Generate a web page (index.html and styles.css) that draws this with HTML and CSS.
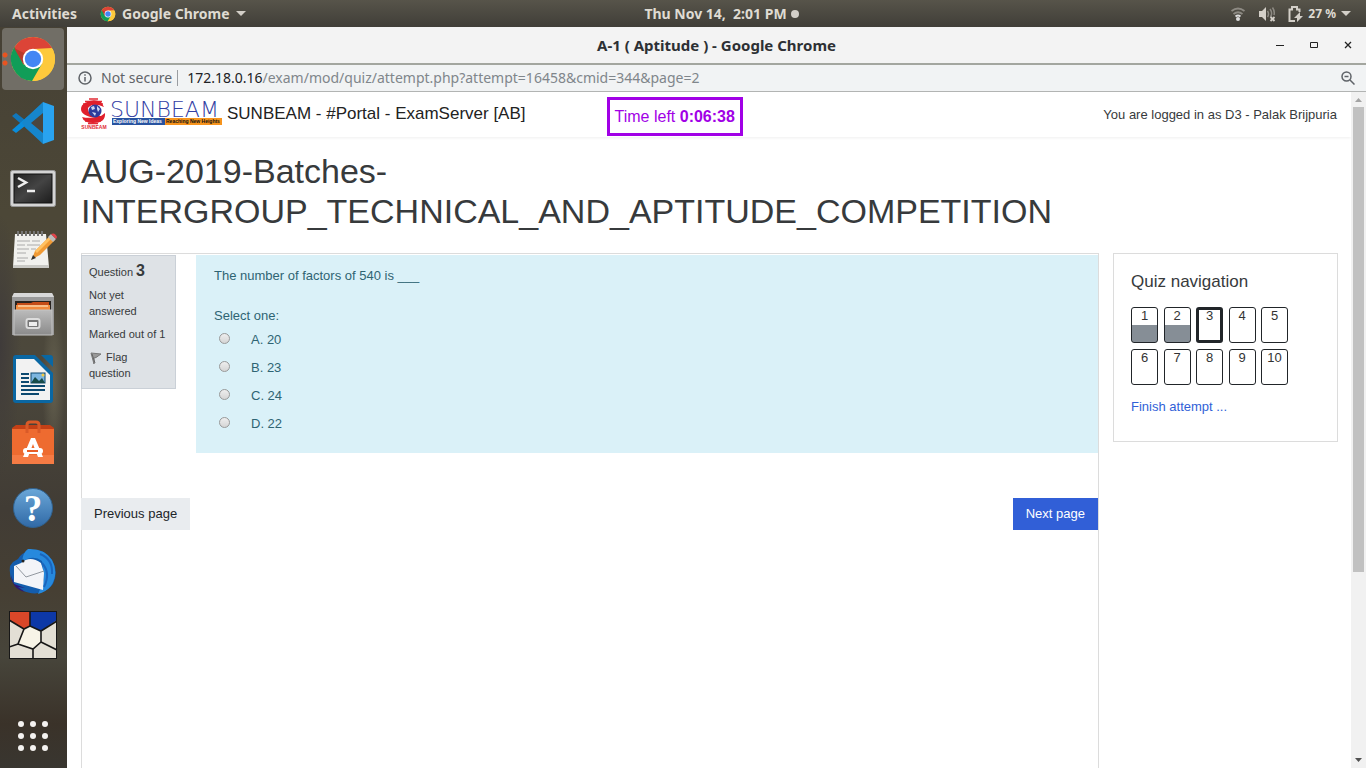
FILE: index.html
```html
<!DOCTYPE html>
<html lang="en">
<head>
<meta charset="utf-8">
<title>A-1 ( Aptitude )</title>
<link rel="stylesheet" href="styles.css">
</head>
<body>
<svg width="0" height="0" class="defs" aria-hidden="true">
  <symbol id="chrome" viewBox="0 0 48 48">
    <circle cx="24" cy="24" r="22" fill="#fdc93c"/>
    <path d="M4.900 13A22 22 0 0 1 43.100 13L24 14L14.500 29.500Z" fill="#dc4437"/>
    <path d="M43.600 14A22 22 0 0 1 23 46L33.500 29.500L24 14Z" fill="#fdc93c"/>
    <path d="M5.500 12A22 22 0 0 0 23 46L32.500 29.500L14.500 29.500Z" fill="#109d58"/>
    <path d="M5 13L14.500 29.500L17 19Z" fill="#b93a2d"/>
    <circle cx="24" cy="24" r="10.200" fill="#fff"/>
    <circle cx="24" cy="24" r="8.200" fill="#4486f4"/>
  </symbol>
</svg>
<header class="topbar">
  <div class="topbar-left">
    <button class="top-item">Activities</button>
    <button class="top-item app-menu"><svg width="16" height="16"><use href="#chrome"/></svg>Google Chrome<svg width="10" height="6" viewBox="0 0 10 6"><path d="M0 0h10l-5 5z" fill="#d3cfc8"/></svg></button>
  </div>
  <button class="top-item clock">Thu Nov 14,&nbsp; 2:01 PM<span class="dot"></span></button>
  <button class="top-item status" aria-label="System menu, battery 27 %">
    <svg width="16" height="16" viewBox="0 0 16 16" fill="none"><path d="M1.500 5Q8 0 14.500 5M3.500 8Q8 4.500 12.500 8" stroke="#8d8a83" stroke-width="1.800"/><path d="M5.500 10.500Q8 8.500 10.500 10.500" stroke="#ddd" stroke-width="1.800"/><circle cx="8" cy="13" r="2" fill="#ddd"/></svg>
    <svg width="18" height="16" viewBox="0 0 18 16" fill="none"><path d="M1 5h3l4-4v14l-4-4H1z" fill="#d3cfc8"/><path d="M9.500 5Q11.500 8 9.500 11M12 3Q15 7 12.500 11M14.500 1.500Q17 5 16 9" stroke="#8d8a83" stroke-width="1.500"/><path d="M12.500 11l4 4m0-4l-4 4" stroke="#d3cfc8" stroke-width="1.800"/></svg>
    <svg width="15" height="16" viewBox="0 0 15 16" fill="none"><path d="M7 15H1.500V3.500H4V1h5v2.500h2.500V6" stroke="#d3cfc8" stroke-width="2"/><path d="M12 6l-6 6h3v4l6-6h-3z" fill="#d3cfc8"/></svg>
    <span class="battery">27 %</span>
    <svg width="10" height="6" viewBox="0 0 10 6"><path d="M0 0h10l-5 5z" fill="#d3cfc8"/></svg>
  </button>
</header>
<div class="desktop">
  <nav class="dock" aria-label="Dock">
    <button class="dock-item active" aria-label="Google Chrome"><svg width="48" height="48"><use href="#chrome"/></svg></button>
    <button class="dock-item" aria-label="Visual Studio Code"><svg width="48" height="48" viewBox="0 0 48 48"><path d="M3 17l4-3 27 21v9z" fill="#1177bb"/><path d="M3 31l4 3 27-21V4z" fill="#0a8ddc"/><path d="M34 3l11 4v34l-11 4z" fill="#29a3f0"/><path d="M34 3v12L23 24l11 9v12L17 29l-4-5 4-5z" fill="#1686cc"/><path d="M34 14v20L22 24z" fill="#4b463d"/></svg></button>
    <button class="dock-item" aria-label="Terminal"><svg width="48" height="48" viewBox="0 0 48 48"><defs><linearGradient id="tg" x1="0" y1="0" x2="1" y2="1"><stop offset="0" stop-color="#222"/><stop offset=".5" stop-color="#444"/><stop offset="1" stop-color="#1c1c1c"/></linearGradient></defs><rect x="1.500" y="7.500" width="45" height="36" rx="2" fill="#d4d4d4" stroke="#989898"/><rect x="5" y="11" width="38" height="29" fill="url(#tg)" stroke="#111"/><path d="M9 15l8 4.500-8 4.500M18 28h8" fill="none" stroke="#eee" stroke-width="2.500"/></svg></button>
    <button class="dock-item" aria-label="Text Editor"><svg width="48" height="48" viewBox="0 0 48 48"><path d="M6 7h31l3 33H4z" fill="#f1f1ee"/><path d="M4 38h36v3H4z" fill="#c9c9c5"/><path d="M9 4v5m4-5v5m4-5v5m4-5v5m4-5v5m4-5v5m4-5v5" stroke="#777" stroke-width="2"/><path d="M8 14h13m2 0h8M8 18h8m2 0h13M8 22h12m2 0h5M8 26h9M8 31h11M8 34h8" stroke="#aaa"/><path d="M23 32l3-8L41 9l5 4-15 15z" fill="#f09a35"/><path d="M26 24l15-15 2 2-15 15z" fill="#ffc162"/><path d="M39 10l3-3 5 5-3 3z" fill="#bbb"/><path d="M42 7q4-2 6 3l-1 2z" fill="#e3434a"/><path d="M22 33l2-5 3 3z" fill="#333"/></svg></button>
    <button class="dock-item" aria-label="Files"><svg width="48" height="48" viewBox="0 0 48 48"><defs><linearGradient id="fg" x1="0" y1="0" x2="0" y2="1"><stop offset="0" stop-color="#bbb"/><stop offset="1" stop-color="#8b8b8b"/></linearGradient></defs><path d="M5 2h38l2 4v38H3V6z" fill="#999"/><path d="M5 2h38l2 4H3z" fill="#d8d8d8"/><path d="M6 10h36v10H6z" fill="#28231f"/><path d="M8 12h14l2-1h16v8H8z" fill="#c54c17"/><path d="M7 14h34v6H7z" fill="#f18a3d"/><path d="M9 15h30" stroke="#fff3d6"/><rect x="5" y="19" width="38" height="25" fill="url(#fg)" stroke="#c4c4c4"/><rect x="17.500" y="28" width="13" height="9" rx="2" fill="#777" stroke="#ddd" stroke-width="2"/><rect x="20" y="31" width="8" height="4" fill="#eee"/></svg></button>
    <button class="dock-item" aria-label="LibreOffice Writer"><svg width="48" height="48" viewBox="0 0 48 48"><path d="M7 0h19l18 18v27q0 3-3 3H7q-3 0-3-3V3q0-3 3-3z" fill="#0a67a3"/><path d="M32 0h9q3 0 3 3v9z" fill="#0a67a3"/><path d="M7 4h18l16 16v25H7z" fill="#f2f2f2"/><path d="M12 19h8M12 23h8M12 27h8M12 31h24M12 35h24M12 39h18" stroke="#0c4970" stroke-width="2"/><rect x="22" y="18" width="14" height="10" fill="#7db6e0" stroke="#0c4970"/><path d="M22 28l4-6 4 4 3-3 3 5z" fill="#174b49"/><circle cx="34" cy="20" r="1.500" fill="#f4cb42"/></svg></button>
    <button class="dock-item" aria-label="Ubuntu Software"><svg width="48" height="48" viewBox="0 0 48 48"><path d="M3 9l4-3h34l4 3v6H3z" fill="#c34016"/><path d="M3 10h42v35H3z" fill="#ee6b30"/><path d="M3 36h42v9H3z" fill="#f57b44"/><path d="M18 14V6q0-3 3-3h6q3 0 3 3v8" fill="none" stroke="#d95a28" stroke-width="3"/><path d="M22 19h4l8 19h-5l-5-13-5 13h-5z" fill="#fff"/><rect x="14" y="29" width="20" height="6" rx="3" fill="#fff"/><path d="M18 32h11" stroke="#e85e27" stroke-width="2"/></svg></button>
    <button class="dock-item" aria-label="Help"><svg width="48" height="48" viewBox="0 0 48 48"><defs><linearGradient id="hg" x1="0" y1="0" x2="0" y2="1"><stop offset="0" stop-color="#6ba7d8"/><stop offset="1" stop-color="#3069a6"/></linearGradient></defs><circle cx="24" cy="25" r="19.500" fill="url(#hg)" stroke="#30618e"/><text x="24" y="38" text-anchor="middle" class="help-mark">?</text></svg></button>
    <button class="dock-item" aria-label="Thunderbird"><svg width="48" height="48" viewBox="0 0 48 48"><path d="M1 19Q-1 36 12 43Q32 52 44 37Q51 22 40 9Q30 0 20 4Q12 6 9 12L4 15z" fill="#145dad"/><path d="M19 2Q35 1 43 13Q50 26 42 39Q37 45 29 47L35 33L33 14Q24 7 13 15Q14 5 19 2z" fill="#2789dd"/><path d="M5 19l7-3q9-8 20 0l3 10-1 17L5 35z" fill="#f3f4f8"/><path d="M7 19l10 11 18-6" fill="none" stroke="#9298a0"/><path d="M2 28l3 9 11 4-7-1 7 5Q3 42 2 28z" fill="#2f1576"/><path d="M31 7Q44 12 43 27M33 16q9 10 2 24" fill="none" stroke="#1a65bd" stroke-width="2"/><circle cx="14" cy="14" r="1.500" fill="#222"/></svg></button>
    <button class="dock-item" aria-label="Mosaic"><svg width="48" height="48" viewBox="0 0 48 48"><path d="M0 0h48v48H0z" fill="#e3dfd5"/><path d="M0 0h21v15l-6 3L0 9z" fill="#d94729"/><path d="M21 0h27v9l-16 11-11-5z" fill="#0d38a7"/><path d="M15 18l6-3 11 5v11l-8 7-15-5z" fill="#f7f4e7"/><path d="M0 9l15 9 6-3V0M48 10L32 20l-11-5M15 18L9 33l15 5 8-7V20M0 36l9-3M24 38v10M32 31l16 8" fill="none" stroke="#171717" stroke-width="1.600"/><rect x=".5" y=".5" width="47" height="47" fill="none" stroke="#171717"/></svg></button>
    <button class="dock-item apps" aria-label="Show applications"><svg width="48" height="48" viewBox="0 0 48 48" fill="#f4f2f0"><circle cx="12" cy="12" r="3"/><circle cx="24" cy="12" r="3"/><circle cx="36" cy="12" r="3"/><circle cx="12" cy="24" r="3"/><circle cx="24" cy="24" r="3"/><circle cx="36" cy="24" r="3"/><circle cx="12" cy="36" r="3"/><circle cx="24" cy="36" r="3"/><circle cx="36" cy="36" r="3"/></svg></button>
  </nav>
  <div class="window">
    <div class="titlebar">
      <span class="window-title">A-1 ( Aptitude ) - Google Chrome</span>
      <div class="window-buttons">
        <button aria-label="Minimize"><svg width="8" height="8"><path d="M0 4.500h8" stroke="#222"/></svg></button>
        <button aria-label="Maximize"><svg width="8" height="8" fill="none"><path d="M.5 1.500h7v5h-7z" stroke="#222"/></svg></button>
        <button aria-label="Close"><svg width="8" height="8"><path d="M1 1l6 6m0-6l-6 6" stroke="#222" stroke-width="1.300"/></svg></button>
      </div>
    </div>
    <div class="urlbar">
      <svg width="14" height="14" viewBox="0 0 14 14" fill="none" stroke="#5f6368" stroke-width="1.500"><circle cx="7" cy="7" r="6"/><path d="M7 6v4.500M7 3.300v1.500"/></svg>
      <span class="insecure">Not secure</span>
      <span class="url"><b>172.18.0.16</b>/exam/mod/quiz/attempt.php?attempt=16458&amp;cmid=344&amp;page=2</span>
      <button class="zoom" aria-label="Zoom"><svg width="14" height="14" viewBox="0 0 14 14" fill="none" stroke="#5f6368" stroke-width="1.500"><circle cx="5.500" cy="5.500" r="4.500"/><path d="M9 9l4.500 4.500M3.500 5.500h4"/></svg></button>
    </div>
    <div class="viewport">
      <div class="page">
        <header class="site-header">
          <a class="brand" href="#">
            <svg width="142" height="32" viewBox="0 0 142 32">
              <g fill="none" stroke="#e22b35" stroke-width="1.500"><path d="M8 1h9M4 3.500h17M2 6h20M2 20.500h20M4 23h16M7 25.500h10"/></g>
              <path d="M4 5Q12 0 20 4L23 9Q12 4 7 10Q6 17 20 18L24 15Q25 25 12 25Q3 25 1 19Q8 22 15 20Q0 18 0 11Q0 7 4 5z" fill="#e01f2c"/>
              <circle cx="14" cy="13" r="6.500" fill="#2d3c9d"/><path d="M10 9l3-1 1 3-3 1zM16 8l3 3-2 3-1-3zM11 14l4 1-1 3z" fill="#cfd8f2"/>
              <text x="13" y="31" text-anchor="middle" class="logo-small">SUNBEAM</text>
              <text x="29" y="19" class="logo-name">SUNBEAM</text>
              <path d="M31 20h53v7H31z" fill="#2853a0"/><path d="M84 20h57v7H84z" fill="#f7941d"/>
              <text x="32" y="25" class="logo-tag logo-tag-light">Exploring New Ideas</text>
              <text x="85" y="25" class="logo-tag">Reaching New Heights</text>
            </svg>
            <span>SUNBEAM - #Portal - ExamServer [AB]</span>
          </a>
          <div class="timer">Time left <b>0:06:38</b></div>
          <span class="login">You are logged in as D3 - Palak Brijpuria</span>
        </header>
        <div class="body">
          <h1>AUG-2019-Batches-<wbr>INTERGROUP_TECHNICAL_AND_APTITUDE_COMPETITION</h1>
          <div class="columns">
            <main class="region">
              <form>
                <div class="question">
                  <section class="info">
                    <h2>Question <b>3</b></h2>
                    <p>Not yet answered</p>
                    <p>Marked out of 1</p>
                    <p><a href="#" class="flag"><svg width="14" height="12" viewBox="0 0 14 12"><path d="M2 1l10 1-5 3.500-2 .5v6z" fill="#999" stroke="#777"/><path d="M3 2l3 9" stroke="#666" fill="none"/></svg> Flag question</a></p>
                  </section>
                  <section class="formulation">
                    <p class="qtext">The number of factors of 540 is ___</p>
                    <fieldset>
                      <legend>Select one:</legend>
                      <label><input type="radio" name="answer">A. 20</label>
                      <label><input type="radio" name="answer">B. 23</label>
                      <label><input type="radio" name="answer">C. 24</label>
                      <label><input type="radio" name="answer">D. 22</label>
                    </fieldset>
                  </section>
                </div>
                <div class="actions">
                  <button type="button" class="btn">Previous page</button>
                  <button type="button" class="btn primary">Next page</button>
                </div>
              </form>
            </main>
            <aside class="quiznav">
              <h2>Quiz navigation</h2>
              <div class="numbers">
                <a href="#" class="saved">1</a><a href="#" class="saved">2</a><a href="#" class="current">3</a><a href="#">4</a><a href="#">5</a><a href="#">6</a><a href="#">7</a><a href="#">8</a><a href="#">9</a><a href="#">10</a>
              </div>
              <a class="finish" href="#">Finish attempt ...</a>
            </aside>
          </div>
        </div>
      </div>
      <div class="scrollbar" aria-hidden="true">
        <svg width="15" height="15"><path d="M4 10h7l-3.500-4z" fill="#a3a3a3"/></svg>
        <div class="track"><div class="thumb"></div></div>
        <svg width="15" height="15"><path d="M4 5h7l-3.500 4z" fill="#505050"/></svg>
      </div>
    </div>
  </div>
</div>
</body>
</html>
```
FILE: styles.css
```css
* { box-sizing: border-box; }
body {
  margin: 0;
  height: 100vh;
  display: flex;
  flex-direction: column;
  overflow: hidden;
  font: 13px/20px "Liberation Sans", Arial, sans-serif;
  color: #373a3c;
}
.defs { position: absolute; }
button { font: inherit; border: 0; padding: 0; background: none; color: inherit; }
h1, h2, p { margin: 0; font-weight: 400; }
a { text-decoration: none; color: inherit; }
svg { flex: none; }

.topbar {
  flex: none;
  height: 27px;
  display: grid;
  grid-template-columns: 1fr auto 1fr;
  align-items: center;
  padding: 0 15px 0 12px;
  background: linear-gradient(#57544a, #403e38);
  color: #dfdbd2;
  font: bold 14px/20px "Noto Sans", "Open Sans", sans-serif;
}
.topbar-left, .top-item { display: flex; align-items: center; }
.topbar-left { gap: 23px; }
.app-menu { gap: 6px; }
.clock { gap: 4px; padding-left: 80px; }
.dot { width: 8px; height: 8px; border-radius: 50%; background: #d3cfc8; }
.status { justify-self: end; gap: 12px; }
.battery { font-size: 12px; margin: 0 -7px; }

.desktop { flex: 1; min-height: 0; display: flex; }
.dock {
  flex: none;
  width: 67px;
  display: flex;
  flex-direction: column;
  gap: 2px;
  padding: 1px 3px 1px 2px;
  background:
    radial-gradient(ellipse at 0 43%, #3f3b3a 0, transparent 22%),
    radial-gradient(ellipse at 80% 48%, #64604f 0, transparent 15%),
    linear-gradient(#464135, #4c4737 25%, #4c483c 45%, #413c35 65%, #463f33 76%, #47453b 85%, #3a3229 94%, #393630);
}
.dock-item {
  flex: none;
  height: 62px;
  display: flex;
  align-items: center;
  justify-content: center;
  border-radius: 4px;
}
.dock-item.active {
  background:
    radial-gradient(circle at 3px 27px, #e95420 2px, transparent 3px),
    radial-gradient(circle at 3px 35px, #e95420 2px, transparent 3px),
    #716e66;
}
.apps { margin-top: auto; }
.help-mark { font: bold 37px "Liberation Serif", serif; fill: #fff; }

.window { flex: 1; min-width: 0; display: flex; flex-direction: column; background: #fff; }
.titlebar {
  flex: none;
  height: 38px;
  display: grid;
  grid-template-columns: 1fr auto 1fr;
  align-items: center;
  padding: 0 14px;
  background: #f3f3f3;
  border-bottom: 2px solid #a3a69f;
  font: bold 15px/20px "Noto Sans", "Open Sans", sans-serif;
  color: #2d3034;
}
.window-title { grid-column: 2; }
.window-buttons { justify-self: end; display: flex; gap: 26px; }
.window-buttons button { display: flex; }
.urlbar {
  flex: none;
  height: 27px;
  display: flex;
  align-items: center;
  padding: 0 11px;
  background: #f1f3f4;
  border-bottom: 1px solid #b2b4b3;
  font: 14px/20px "Noto Sans", "Open Sans", sans-serif;
  color: #5f6368;
}
.insecure { margin: 0 5px 0 9px; }
.url { flex: 1; padding-left: 9px; line-height: 16px; border-left: 1px solid #9a9da1; color: #80868b; }
.url b { font-weight: 400; color: #202124; }
.zoom { display: flex; }

.viewport { flex: 1; min-height: 0; display: flex; }
.page { flex: 1; min-width: 0; display: flex; flex-direction: column; overflow: hidden; }
.site-header {
  flex: none;
  height: 45px;
  display: flex;
  align-items: center;
  padding: 0 14px 1px;
  box-shadow: 0 1px 3px #0001;
}
.brand { display: flex; align-items: center; gap: 4px; font-size: 17px; color: #222; }
.logo-small { font: bold 5px "Liberation Sans", Arial, sans-serif; fill: #e22b35; }
.logo-name { font: 200 22px "DejaVu Sans", sans-serif; fill: #3340a4; }
.logo-tag { font: bold 5px "Liberation Sans", Arial, sans-serif; fill: #111; }
.logo-tag-light { fill: #fff; }
.timer {
  align-self: flex-end;
  margin-left: 81px;
  border: 3px solid #a100e6;
  padding: 6px 5px;
  font-size: 16px;
  line-height: 21px;
  color: #a100e6;
}
.login { margin-left: auto; line-height: 22px; padding-top: 2px; }

.body { flex: 1; min-height: 0; display: flex; flex-direction: column; padding: 14px 13px 0 14px; }
h1 { font-size: 34px; line-height: 40px; padding-bottom: 22px; }
.columns { flex: 1; min-height: 0; display: flex; align-items: flex-start; gap: 14px; }
.region { flex: 1; align-self: stretch; min-width: 0; border: 1px solid #dcdcdc; border-bottom: 0; padding-top: 1px; }
.question, .actions { display: flex; margin-left: -1px; }
.question { align-items: flex-start; gap: 20px; }
.info {
  flex: none;
  width: 95px;
  padding: 6px 7px 7px;
  background: #dee2e6;
  border: 1px solid #cad0d7;
  font-size: 11px;
  line-height: 16px;
}
.info h2 { font-size: 11px; line-height: 17px; margin-bottom: 6px; }
.info h2 b { font-size: 16px; }
.info p + p { margin-top: 7px; }
.flag svg { vertical-align: -3px; }
.formulation { flex: 1; padding: 11px 18px 15px; background: #daf1f8; color: #2f6473; }
.qtext { margin-bottom: 20px; }
fieldset { border: 0; margin: 0; padding: 0; }
legend { padding: 0; }
label { display: flex; align-items: center; height: 28px; }
input[type="radio"] {
  appearance: none;
  width: 11px;
  height: 11px;
  margin: 0 21px 3px 5px;
  border: 1px solid #999;
  border-radius: 50%;
  background: linear-gradient(#eee, #d5d5d5);
}
.actions { justify-content: space-between; margin-top: 45px; }
.btn { height: 32px; padding: 0 13px; background: #e9ecef; color: #212529; }
.primary { background: #315fd7; color: #fff; }

.quiznav { flex: none; width: 225px; padding: 18px 17px 17px; border: 1px solid #dcdcdc; }
.quiznav h2 { font-size: 17px; line-height: 20px; margin-bottom: 15px; }
.numbers { display: grid; grid-template-columns: repeat(5, 27px); justify-content: space-between; row-gap: 6px; width: 157px; margin-bottom: 12px; }
.numbers a {
  height: 36px;
  border: 1px solid #212529;
  border-radius: 3px;
  line-height: 15px;
  text-align: center;
  color: #333;
}
.numbers .saved { background: linear-gradient(#fff 17px, #868e96 17px); }
.numbers .current { border-width: 3px; line-height: 11px; }
.finish { display: block; color: #315fd7; padding-bottom: 7px; }

.scrollbar { flex: none; width: 15px; display: flex; flex-direction: column; background: #f1f1f1; }
.track { flex: 1; padding: 0 2px; }
.thumb { height: 72%; background: #c1c1c1; }
```
